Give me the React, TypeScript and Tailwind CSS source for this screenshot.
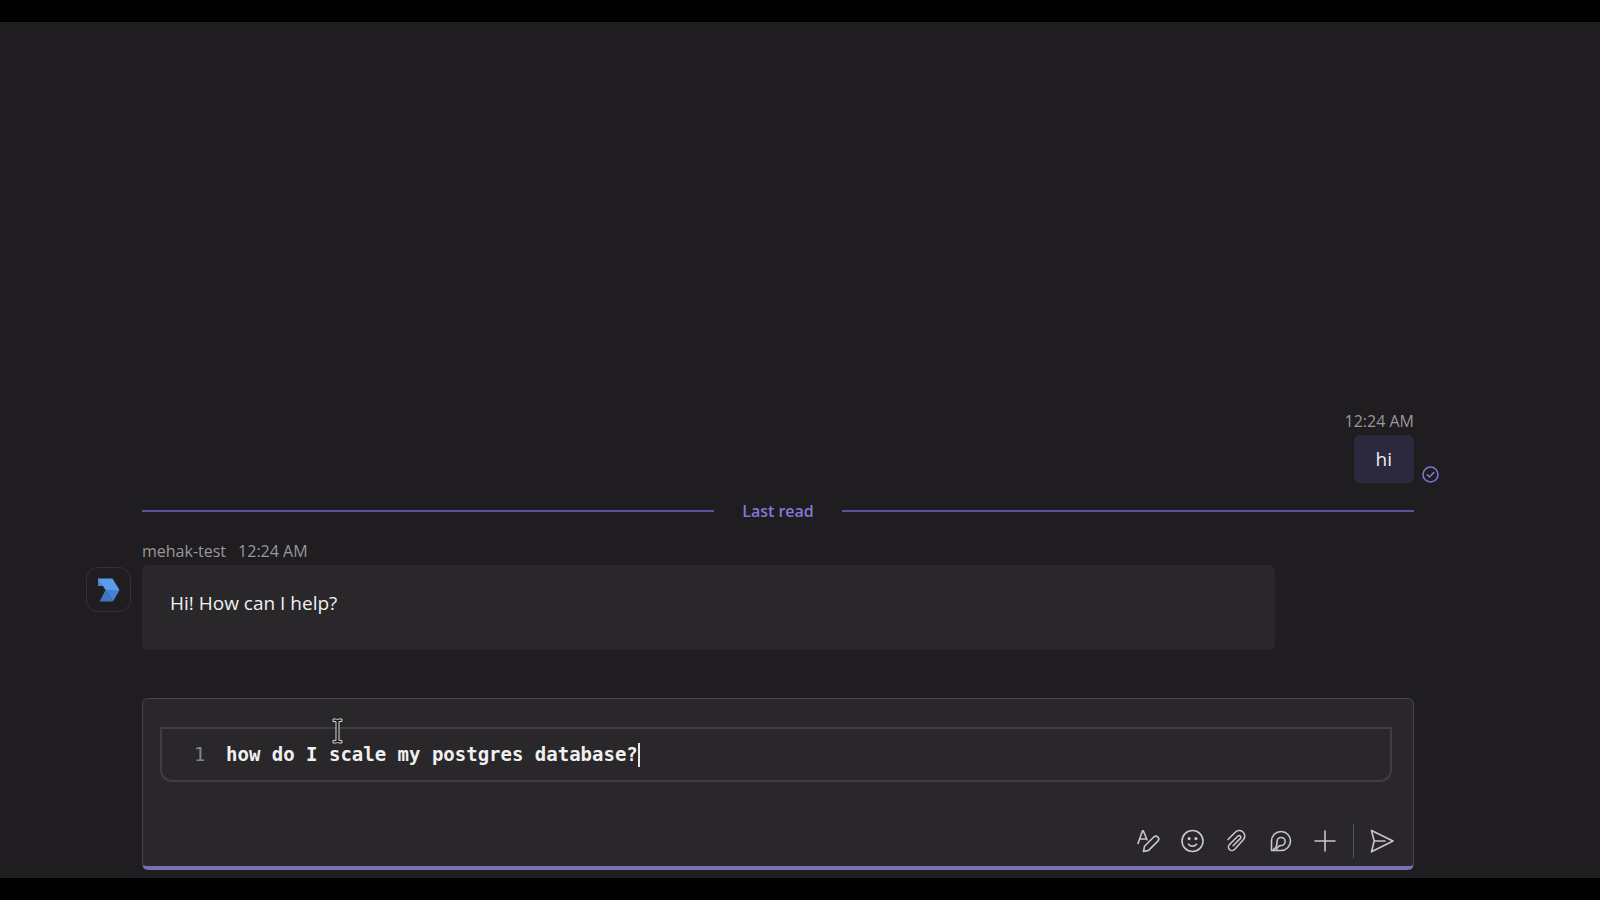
import React, { useState } from 'react';

const iconProps = {
  fill: 'none',
  stroke: 'currentColor',
  strokeWidth: 1.6,
  strokeLinecap: 'round',
  strokeLinejoin: 'round',
} as const;

const FormatIcon = () => (
  <svg width="24" height="24" viewBox="0 0 24 24" {...iconProps}>
    <path d="M1 14.500 5.500 1.800h.8l3.700 9M2.800 10h6.200" />
    <path d="M6.500 22.500l1-5.200 9.300-9.300a2.900 2.900 0 0 1 4.100 4.100l-9.300 9.300z" />
  </svg>
);

const EmojiIcon = () => (
  <svg width="24" height="24" viewBox="0 0 24 24" {...iconProps}>
    <circle cx="11.500" cy="12" r="10.500" />
    <path d="M7.500 15.2c2 2.6 6 2.6 8 0" />
    <circle cx="8.1" cy="9.6" r="0.8" fill="currentColor" />
    <circle cx="14.9" cy="9.6" r="0.8" fill="currentColor" />
  </svg>
);

const AttachIcon = () => (
  <svg width="24" height="24" viewBox="0 0 24 24" {...iconProps}>
    <path d="M3 10.500l7-7a5.500 5.500 0 0 1 8.500 7L9.500 20.500a3.400 3.400 0 0 1-5-5l8.500-8.500a1.700 1.700 0 0 1 2.400 2.400l-7.300 7.300" />
  </svg>
);

const LoopIcon = () => (
  <svg width="24" height="24" viewBox="0 0 24 24" {...iconProps}>
    <path d="M2.500 21.500V12a9.500 9.500 0 1 1 9.500 9.500z" />
    <path d="M4.500 20.500c3-1.500 3.600-3.500 3.600-8a4 4 0 1 1 4 4c-2.500 0-3.600 1.800-4.600 4" />
  </svg>
);

const PlusIcon = () => (
  <svg width="24" height="24" viewBox="0 0 24 24" {...iconProps}>
    <path d="M12 2v20M2 12h20" />
  </svg>
);

const SendIcon = () => (
  <svg width="24" height="24" viewBox="0 0 24 24" {...iconProps}>
    <path d="M1.500 1.500 23 12 1.500 22.800 4.200 12zM4.500 12h10.500" />
  </svg>
);

const BotLogo = () => (
  <svg width="24" height="24" viewBox="0 0 24 24" aria-hidden="true">
    <path d="M1 .5h14.500l7 11.500H8.500L6 8H1z" fill="#5b9bea" />
    <path d="M1 .5V8h5z" fill="#4a86d8" />
    <path d="M8.500 12h14l-6.500 11.500z" fill="#4482d4" />
    <path d="M8.500 12 2.500 23.500H16z" fill="#3f74c4" />
  </svg>
);

const ReadReceipt = () => (
  <svg width="17" height="17" viewBox="0 0 17 17" role="img" aria-label="Sent" {...iconProps}>
    <circle cx="8.500" cy="8.500" r="7.500" />
    <path d="M5.300 8.800l2.200 2.200 4.300-4.400" />
  </svg>
);

const actions = [
  { label: 'Format', Icon: FormatIcon },
  { label: 'Emoji', Icon: EmojiIcon },
  { label: 'Attach files', Icon: AttachIcon },
  { label: 'Loop components', Icon: LoopIcon },
  { label: 'Actions and apps', Icon: PlusIcon },
];

const LastRead = () => (
  <div className="col-start-2 mt-4 flex h-6 items-center gap-7 text-[#8278d8]">
    <div className="h-[2px] flex-1 bg-[#5b50a8]" />
    <span className="text-base font-semibold">Last read</span>
    <div className="h-[2px] flex-1 bg-[#5b50a8]" />
  </div>
);

const Composer: React.FC = () => {
  const [message, setMessage] = useState('how do I scale my postgres database?');

  return (
    <form
      onSubmit={(e) => e.preventDefault()}
      className="relative col-start-2 mt-12 rounded-md border border-b-[4px] border-[#454347] border-b-[#7a6fb5] bg-[#29272a] px-[17px] pt-7 pb-[2px]"
    >
      <div className="mr-1 flex h-[55px] items-center rounded-b-xl border-2 border-[#403e42] pl-8 font-['DejaVu_Sans_Mono',monospace] text-[19px]">
        <span className="w-8 text-[#858387]">1</span>
        <input
          aria-label="Type a message"
          value={message}
          onChange={(e) => setMessage(e.target.value)}
          className="field-sizing-content font-bold text-[#f0f0f0] caret-transparent outline-none"
        />
        <span className="h-6 w-[2px] bg-[#e8e8e8]" />
      </div>
      <div className="mt-9 flex h-[46px] items-center justify-end text-[#c8c6c9]">
        <div className="flex gap-5">
          {actions.map(({ label, Icon }) => (
            <button key={label} type="button" aria-label={label} title={label}>
              <Icon />
            </button>
          ))}
        </div>
        <div className="mx-4 h-[34px] w-px bg-[#55535a]" />
        <button type="submit" aria-label="Send" title="Send" className="mr-[2px]">
          <SendIcon />
        </button>
      </div>
      <svg
        className="pointer-events-none absolute top-[19px] left-[189px]"
        width="11"
        height="26"
        viewBox="0 0 11 26"
        aria-hidden="true"
      >
        <path d="M1 1h3.500l1 1 1-1H10v2.500H7v19h3V25H6.500l-1-1-1 1H1v-2.500h3v-19H1z" fill="#1b1a1c" stroke="#d8d8d8" />
      </svg>
    </form>
  );
};

export default function App() {
  return (
    <main className="flex min-h-screen flex-col justify-end border-y-[22px] border-black bg-[#1f1d20] pr-[161px] pb-2 pl-[86px] font-['Open_Sans','Noto_Sans',sans-serif] text-[#f0f0f0]">
      <div className="grid grid-cols-[48px_1fr_17px] gap-x-2">
        <time className="col-start-2 justify-self-end text-base leading-7 text-[#99979b]">12:24 AM</time>
        <div className="col-start-2 flex h-12 items-center justify-self-end rounded-md bg-[#2c293e] px-[22px] text-[19px] font-medium">
          hi
        </div>
        <div className="self-end text-[#7f74cf]">
          <ReadReceipt />
        </div>

        <LastRead />

        <div className="col-start-2 mt-[14px] flex gap-3 text-base leading-7 text-[#99979b]">
          <span>mehak-test</span>
          <time>12:24 AM</time>
        </div>
        <div className="col-start-1 mt-[2px] flex size-[45px] items-center justify-center rounded-xl border border-[#333135]">
          <BotLogo />
        </div>
        <div className="mr-[139px] h-[85px] rounded-md bg-[#29272a] px-7 pt-6 text-[19px] leading-7 font-medium">
          Hi! How can I help?
        </div>

        <Composer />
      </div>
    </main>
  );
}
